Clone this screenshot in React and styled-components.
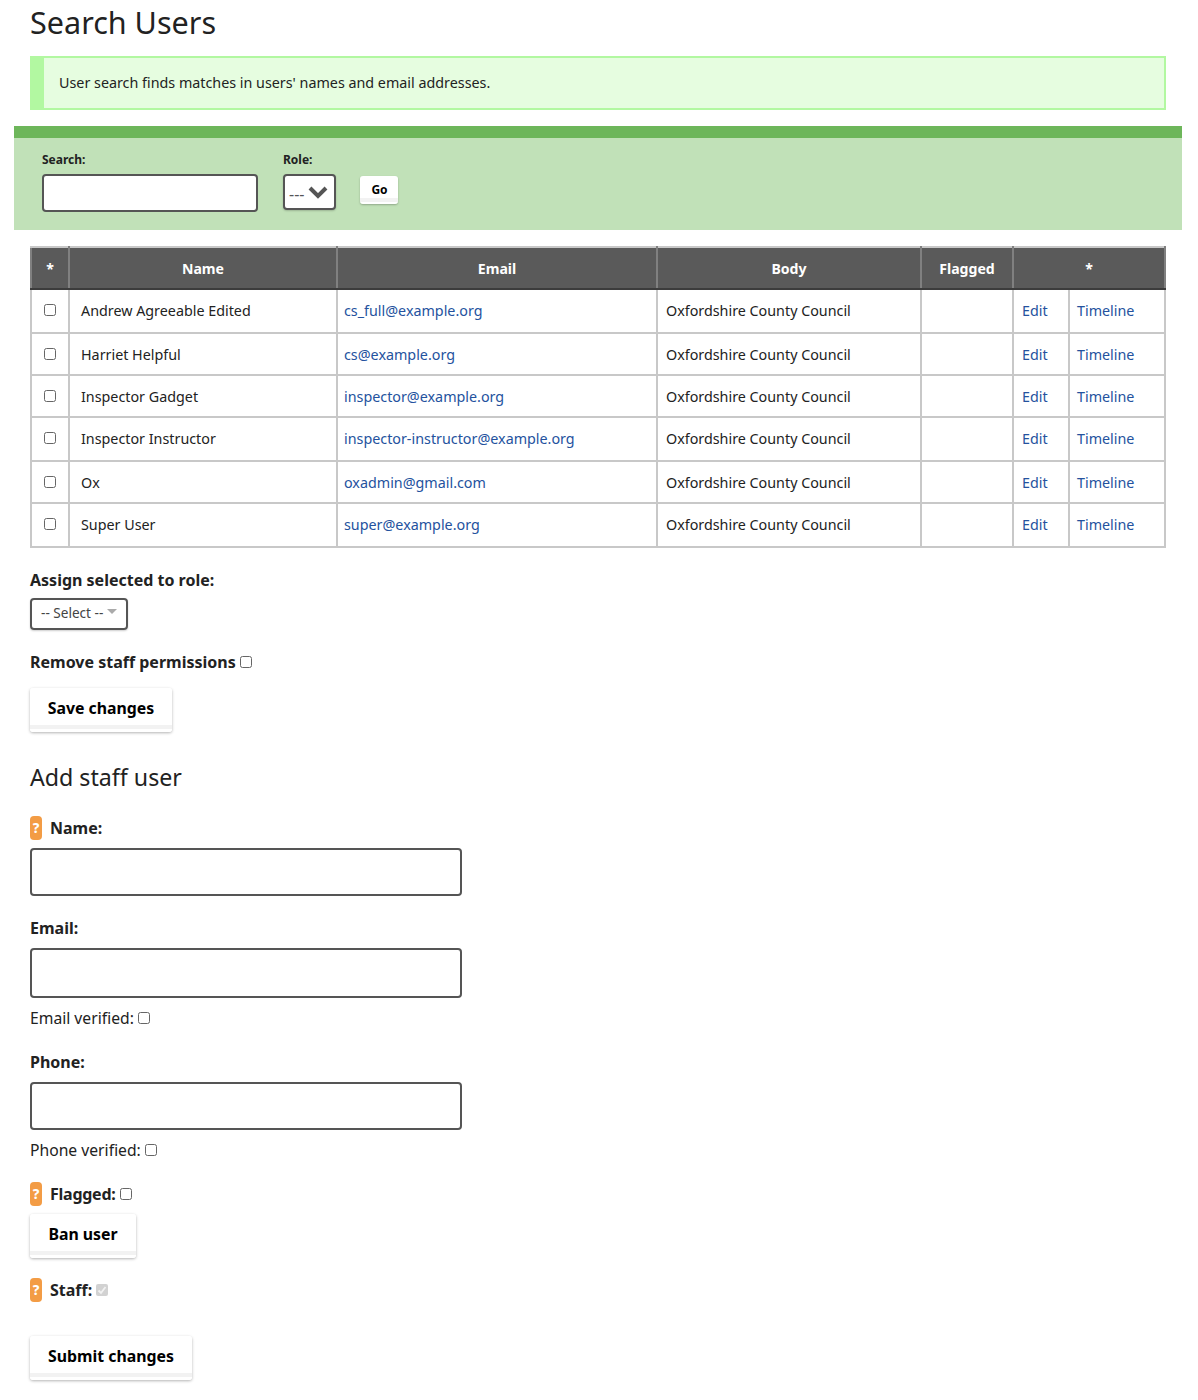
import React from "react";
import styled, { createGlobalStyle } from "styled-components";

const GlobalStyle = createGlobalStyle`
  body {
    margin: 0;
    background: #fff;
    color: #222;
    font-family: "Noto Sans", "Open Sans", sans-serif;
    font-size: 14.32px;
    line-height: 20px;
  }
`;

const Page = styled.div`
  width: 1198px;
  height: 1400px;
  box-sizing: border-box;
  padding: 0 32px 0 30px;
  overflow: hidden;
`;

const Title = styled.h1`
  margin: 0;
  height: 46px;
  font-size: 30.55px;
  line-height: 44px;
  font-weight: 400;
  color: #222;
`;

const Notice = styled.div`
  margin-top: 10px;
  height: 54px;
  box-sizing: border-box;
  display: flex;
  align-items: center;
  padding-left: 15px;
  padding-bottom: 1px;
  background: #e6fde0;
  border: 2px solid #b2f8a1;
  border-left-width: 14px;
`;

const FilterBand = styled.form`
  margin: 16px -16px 0;
  height: 104px;
  box-sizing: border-box;
  background: #c1e1b8;
  border-top: 12px solid #6db65a;
  padding: 12px 28px 0;
  display: flex;
  gap: 24px;
`;

const FilterField = styled.div`
  display: flex;
  flex-direction: column;
  margin-right: ${({ $after }) => $after ?? 0}px;
`;

const FilterLabel = styled.label`
  font-size: 12px;
  font-weight: 700;
  line-height: 20px;
  margin-bottom: 4px;
`;

const TextBox = styled.input`
  display: block;
  box-sizing: border-box;
  width: ${({ $width }) => $width}px;
  height: ${({ $height }) => $height}px;
  border: 2px solid #555;
  border-radius: 4px;
  background: #fff;
  padding: 0 8px;
  outline: none;
`;

const RoleSelect = styled.div`
  box-sizing: border-box;
  width: 53px;
  height: 36px;
  border: 2px solid #555;
  border-radius: 4px;
  background: #fff;
  box-shadow: 0 1px 2px rgba(0, 0, 0, 0.2);
  display: flex;
  align-items: center;
  padding-left: 4px;
  gap: 4px;
  font-size: 16px;
  color: #555;
`;

const RoleDashes = styled.span`
  margin-top: 4px;
`;

const GoButton = styled.button`
  align-self: flex-start;
  margin-top: 26px;
  width: 38px;
  height: 28px;
  padding: 0 0 1px 1px;
  border: 0;
  border-radius: 3px;
  background: linear-gradient(#fff 0 22px, #f2f2f2 22px 26px, #fff 26px);
  box-shadow: 0 1px 2px rgba(0, 0, 0, 0.25);
  font-family: inherit;
  font-size: 12px;
  font-weight: 700;
  color: #000;
`;

const Table = styled.table`
  margin-top: 16px;
  width: 1136px;
  table-layout: fixed;
  border-collapse: collapse;
`;

const HeadCell = styled.th`
  height: 39px;
  padding: 1px 0 0;
  background: #5a5a5a;
  color: #fff;
  font-size: 14.1px;
  font-weight: 700;
  text-align: center;
  border: 2px solid #808080;
  border-top-color: #c8c8c8;
  border-bottom-color: #3c3c3c;
`;

const Row = styled.tr`
  height: ${({ $height }) => $height}px;
`;

const Cell = styled.td`
  padding: 11px 0 0 ${({ $pad }) => $pad ?? 6}px;
  border: 2px solid #c8c8c8;
  vertical-align: top;
  text-align: left;
  color: #222;
  white-space: nowrap;
`;

const TickCell = styled.td`
  padding: 14px 0 0;
  border: 2px solid #c8c8c8;
  vertical-align: top;
  text-align: center;
  line-height: 12px;
`;

const Link = styled.a`
  color: #24529e;
  text-decoration: none;
`;

const Tick = styled.input.attrs({ type: "checkbox" })`
  appearance: none;
  display: inline-block;
  box-sizing: border-box;
  width: 12px;
  height: 12px;
  margin: 0;
  border: 1px solid #666;
  border-radius: 2.5px;
  background: #fff;
  vertical-align: top;
`;

const AssignLabel = styled.div`
  margin-top: 22px;
  font-size: 16px;
  font-weight: 700;
  line-height: 20px;
`;

const SelectButton = styled.div`
  margin-top: 8px;
  box-sizing: border-box;
  width: 98px;
  height: 32px;
  border: 2px solid #555;
  border-radius: 4px;
  box-shadow: 0 1px 2px rgba(0, 0, 0, 0.2);
  display: flex;
  align-items: center;
  padding: 0 0 2px 9px;
  gap: 4px;
  font-size: 13.6px;
  color: #444;
`;

const Caret = styled.span`
  width: 0;
  height: 0;
  margin-bottom: 3px;
  border-left: 5px solid transparent;
  border-right: 5px solid transparent;
  border-top: 5px solid #aaa;
`;

const BoldLine = styled.div`
  margin-top: ${({ $top }) => $top}px;
  display: flex;
  align-items: center;
  height: 20px;
  gap: 4px;
  font-size: 16px;
  font-weight: 700;
`;

const NarrowLabel = styled.span`
  letter-spacing: -0.25px;
`;

const PlainLine = styled.div`
  margin-top: ${({ $top }) => $top}px;
  display: flex;
  align-items: center;
  height: 20px;
  gap: 4px;
  font-size: 15.7px;
`;

const Button = styled.button`
  display: block;
  margin-top: ${({ $top }) => $top}px;
  width: ${({ $width }) => $width}px;
  height: 44px;
  padding: 0 0 5px;
  border: 0;
  border-radius: 3px;
  background: linear-gradient(#fff 0 37px, #f2f2f2 37px 41px, #fff 41px);
  box-shadow: 0 1px 3px rgba(0, 0, 0, 0.3);
  font-family: inherit;
  font-size: 15.85px;
  font-weight: 700;
  color: #000;
`;

const SubTitle = styled.h2`
  margin: 29px 0 0;
  height: 32px;
  font-size: 23.2px;
  line-height: 32px;
  font-weight: 400;
  color: #222;
`;

const HelpBadge = styled.span`
  width: 12px;
  height: 24px;
  margin-right: 4px;
  border-radius: 4px;
  background: #f39c45;
  color: #fff;
  font-size: 13.5px;
  font-weight: 800;
  line-height: 24px;
  text-align: center;
`;

const StaffTick = styled.span`
  width: 12px;
  height: 12px;
  border-radius: 2px;
  background: #d2d2d2;
  display: flex;
  align-items: center;
  justify-content: center;
`;

const FieldBox = styled(TextBox)`
  margin-top: ${({ $top }) => $top}px;
`;

const people = [
  ["Andrew Agreeable Edited", "cs_full@example.org", 44],
  ["Harriet Helpful", "cs@example.org", 42],
  ["Inspector Gadget", "inspector@example.org", 42],
  ["Inspector Instructor", "inspector-instructor@example.org", 44],
  ["Ox", "oxadmin@gmail.com", 42],
  ["Super User", "super@example.org", 44],
];

const App = () => (
  <Page>
    <GlobalStyle />
    <Title>Search Users</Title>
    <Notice>User search finds matches in users' names and email addresses.</Notice>

    <FilterBand>
      <FilterField $after={1}>
        <FilterLabel>Search:</FilterLabel>
        <TextBox $width={216} $height={38} />
      </FilterField>
      <FilterField>
        <FilterLabel>Role:</FilterLabel>
        <RoleSelect>
          <RoleDashes>---</RoleDashes>
          <svg width="20" height="14" viewBox="0 0 20 14">
            <path d="M2 3l8 8 8-8" fill="none" stroke="#555" strokeWidth="4" />
          </svg>
        </RoleSelect>
      </FilterField>
      <GoButton type="button">Go</GoButton>
    </FilterBand>

    <Table>
      <colgroup>
        <col width="38" />
        <col width="268" />
        <col width="320" />
        <col width="264" />
        <col width="92" />
        <col width="56" />
        <col width="96" />
      </colgroup>
      <thead>
        <tr>
          <HeadCell>*</HeadCell>
          <HeadCell>Name</HeadCell>
          <HeadCell>Email</HeadCell>
          <HeadCell>Body</HeadCell>
          <HeadCell>Flagged</HeadCell>
          <HeadCell colSpan={2}>*</HeadCell>
        </tr>
      </thead>
      <tbody>
        {people.map(([name, email, height]) => (
          <Row key={email} $height={height}>
            <TickCell>
              <Tick />
            </TickCell>
            <Cell $pad={11}>{name}</Cell>
            <Cell>
              <Link href="#">{email}</Link>
            </Cell>
            <Cell $pad={8}>Oxfordshire County Council</Cell>
            <Cell />
            <Cell $pad={8}>
              <Link href="#">Edit</Link>
            </Cell>
            <Cell $pad={7}>
              <Link href="#">Timeline</Link>
            </Cell>
          </Row>
        ))}
      </tbody>
    </Table>

    <AssignLabel>Assign selected to role:</AssignLabel>
    <SelectButton>
      -- Select --
      <Caret />
    </SelectButton>
    <BoldLine $top={22}>
      Remove staff permissions <Tick />
    </BoldLine>
    <Button type="button" $top={16} $width={142}>
      Save changes
    </Button>

    <SubTitle>Add staff user</SubTitle>

    <BoldLine $top={25}>
      <HelpBadge>?</HelpBadge>
      Name:
    </BoldLine>
    <FieldBox $top={10} $width={432} $height={48} />

    <BoldLine $top={22}>Email:</BoldLine>
    <FieldBox $top={10} $width={432} $height={50} />
    <PlainLine $top={10}>
      Email verified: <Tick />
    </PlainLine>

    <BoldLine $top={24}>Phone:</BoldLine>
    <FieldBox $top={10} $width={432} $height={48} />
    <PlainLine $top={10}>
      Phone verified: <Tick />
    </PlainLine>

    <BoldLine $top={24}>
      <HelpBadge>?</HelpBadge>
      <NarrowLabel>Flagged:</NarrowLabel> <Tick />
    </BoldLine>
    <Button type="button" $top={10} $width={106}>
      Ban user
    </Button>

    <BoldLine $top={22}>
      <HelpBadge>?</HelpBadge>
      Staff:
      <StaffTick>
        <svg width="10" height="10" viewBox="0 0 10 10">
          <path d="M1.5 5.5l2.5 2.5 4.5-6" fill="none" stroke="#f2f2f2" strokeWidth="1.8" />
        </svg>
      </StaffTick>
    </BoldLine>
    <Button type="button" $top={36} $width={162}>
      Submit changes
    </Button>
  </Page>
);

export default App;
